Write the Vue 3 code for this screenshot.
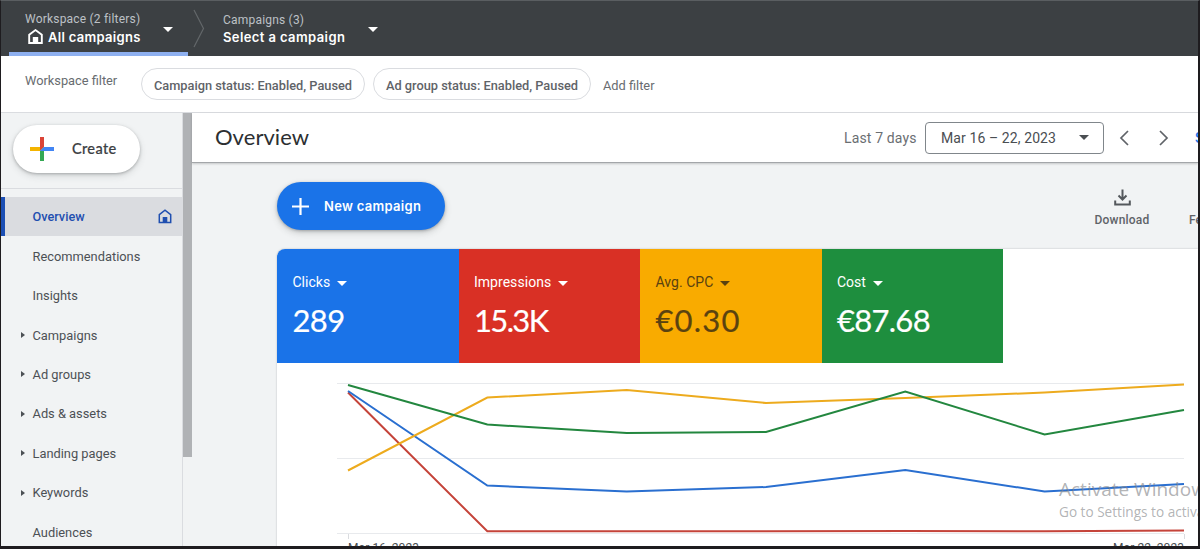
<script setup>
const navItems = [
  { label: 'Overview', active: true },
  { label: 'Recommendations' },
  { label: 'Insights' },
  { label: 'Campaigns', expandable: true },
  { label: 'Ad groups', expandable: true },
  { label: 'Ads & assets', expandable: true },
  { label: 'Landing pages', expandable: true },
  { label: 'Keywords', expandable: true },
  { label: 'Audiences' },
]

const metrics = [
  { label: 'Clicks', value: '289', tone: 'blue' },
  { label: 'Impressions', value: '15.3K', tone: 'red' },
  { label: 'Avg. CPC', value: '€0.30', tone: 'yellow' },
  { label: 'Cost', value: '€87.68', tone: 'green' },
]

const xs = [71, 210.3, 349.7, 489, 628.3, 767.6, 907]
const series = [
  { color: '#c5443a', ys: [29.5, 168.3, 168.3, 168.3, 168, 168.3, 167.5] },
  { color: '#2a6fd0', ys: [28, 122.5, 128.5, 124, 107, 128.5, 121] },
  { color: '#edab1e', ys: [107.5, 34.5, 27, 40, 35, 29.5, 21.5] },
  { color: '#23873f', ys: [22, 61.5, 70, 69, 28.5, 71.5, 47] },
].map((s) => ({ color: s.color, points: s.ys.map((y, i) => `${xs[i]},${y}`).join(' ') }))
</script>

<template>
  <div class="frame">
    <header class="topbar">
      <div class="crumb workspace">
        <div class="crumb-text">
          <span class="crumb-small">Workspace (2 filters)</span>
          <span class="crumb-main">
            <svg class="home" width="15" height="15" viewBox="0 0 15 15"><path d="M1.200 5.700 7.500 1.100l6.300 4.600V14H1.200Z" fill="none" stroke="#fff" stroke-width="1.900" /><rect x="4.800" y="8" width="5.400" height="6" fill="#fff" /></svg>
            <span>All campaigns</span>
          </span>
        </div>
        <i class="caret"></i>
      </div>
      <svg class="chevron" width="14" height="40" viewBox="0 0 14 40"><path d="M1 1 10.500 19.500 1 38" fill="none" stroke="#63676a" stroke-width="1.200" /></svg>
      <div class="crumb campaign">
        <div class="crumb-text">
          <span class="crumb-small">Campaigns (3)</span>
          <span class="crumb-main">Select a campaign</span>
        </div>
        <i class="caret"></i>
      </div>
    </header>

    <div class="filters">
      <span class="filter-label">Workspace filter</span>
      <span class="chip chip-a">Campaign status: Enabled, Paused</span>
      <span class="chip chip-b">Ad group status: Enabled, Paused</span>
      <span class="add">Add filter</span>
    </div>

    <div class="body">
      <aside class="sidebar">
        <div class="create-area">
          <button class="create">
            <svg width="24" height="24" viewBox="0 0 24 24">
              <path d="M10 0h4v10l-4 4Z" fill="#db4437" />
              <path d="M0 10h10v4H0Z" fill="#f4b400" />
              <path d="M10 14l4-4v14h-4Z" fill="#34a853" />
              <path d="M14 10h10v4H10Z" fill="#4285f4" />
            </svg>
            <span>Create</span>
          </button>
        </div>
        <nav>
          <a v-for="item in navItems" :key="item.label" class="nav-item" :class="{ active: item.active }">
            <i class="arrow" :class="{ shown: item.expandable }"></i>
            <span class="nav-label">{{ item.label }}</span>
            <svg v-if="item.active" class="nav-home" width="14" height="15" viewBox="0 0 14 15"><path d="M1.300 5.600 7 1.200l5.700 4.400V13.500H1.300Z" fill="none" stroke="#1f4fb0" stroke-width="1.500" /><rect x="4.700" y="8" width="4.600" height="5.500" fill="#1f4fb0" /></svg>
          </a>
        </nav>
      </aside>
      <div class="scroll"><div class="thumb"></div></div>

      <main class="main">
        <div class="page-head">
          <h1>Overview</h1>
          <span class="range-label">Last 7 days</span>
          <div class="range"><span>Mar 16 – 22, 2023</span><i class="caret"></i></div>
          <svg class="prev" width="10" height="16" viewBox="0 0 10 16"><path d="M9 1 2 8l7 7" fill="none" stroke="#5f6368" stroke-width="1.700" /></svg>
          <svg class="next" width="10" height="16" viewBox="0 0 10 16"><path d="M1 1l7 7-7 7" fill="none" stroke="#5f6368" stroke-width="1.700" /></svg>
          <span class="show">Show</span>
        </div>

        <div class="content">
          <div class="actions">
            <button class="new">
              <svg width="17" height="17" viewBox="0 0 17 17"><path d="M8.500 0v17M0 8.500h17" stroke="#fff" stroke-width="2.200" /></svg>
              <span>New campaign</span>
            </button>
            <div class="tool">
              <svg width="17" height="17" viewBox="0 0 17 17"><path d="M8.500 0.500v9.500M4.500 6.500l4 4 4-4M1.200 11.500v4h14.600v-4" fill="none" stroke="#54585c" stroke-width="2" /></svg>
              <span>Download</span>
            </div>
            <span class="feedback">Feedback</span>
          </div>

          <section class="panel">
            <div class="metrics">
              <div v-for="m in metrics" :key="m.label" class="metric" :class="m.tone">
                <div class="metric-label"><span>{{ m.label }}</span><i class="caret"></i></div>
                <div class="metric-value">{{ m.value }}</div>
              </div>
            </div>
            <svg class="chart" width="921" height="183" viewBox="0 0 921 183">
              <path d="M60 20.500H907M60 95.500H907M60 170.500H907" stroke="#e8eaed" stroke-width="1.200" />
              <path d="M71.500 171v5M907.500 171v5" stroke="#dadce0" />
              <polyline v-for="s in series" :key="s.color" :points="s.points" fill="none" :stroke="s.color" stroke-width="2" />
              <text x="71" y="189" textLength="71">Mar 16, 2023</text>
              <text x="836" y="189" textLength="71">Mar 22, 2023</text>
            </svg>
          </section>
        </div>
      </main>
    </div>

    <div class="watermark">
      <div class="wm-title">Activate Windows</div>
      <div class="wm-sub">Go to Settings to activate Windows.</div>
    </div>
  </div>
</template>

<style>
body { margin: 0; overflow: hidden; }
</style>

<style scoped>
* { box-sizing: border-box; }
.frame {
  position: relative; width: 1200px; height: 549px; overflow: hidden;
  display: flex; flex-direction: column;
  border: solid #1e1c1f; border-width: 1px 2px 3px 1px; border-top-color: #5a5e61;
  background: #f1f3f4; color: #4a4e52; font-family: Roboto, sans-serif; font-size: 13px;
  white-space: nowrap;
}
.topbar { flex: none; display: flex; height: 55px; background: #3c4043; }
.crumb { display: flex; color: #fff; }
.crumb-text { display: flex; flex-direction: column; }
.crumb-small { height: 18px; font-size: 12px; line-height: 18px; color: #bdc1c6; letter-spacing: .2px; }
.crumb-main { display: flex; height: 18px; font: 600 13px/18px Inter, sans-serif; letter-spacing: .4px; }
.workspace { width: 179px; margin-left: 8px; padding: 9px 0 0 16px; border-bottom: 4px solid #8eb0f0; border-radius: 3px 3px 0 0; }
.workspace .crumb-text { width: 138px; }
.workspace .crumb-main { letter-spacing: .3px; }
.home { flex: none; margin: 1px 5px 0 3px; }
.caret { width: 0; height: 0; border: 5.500px solid transparent; border-top: 5px solid currentColor; border-bottom: 0; }
.crumb .caret { margin-top: 17px; }
.chevron { margin: 8px 0 0 5px; }
.campaign { padding: 10px 0 0 16px; }
.campaign .crumb-text { width: 145px; }
.campaign .crumb-main { margin-top: -1px; }
.campaign .caret { margin-top: 16px; }

.filters { flex: none; display: flex; height: 57px; padding: 12px 0 0 24px; background: #fff; border-bottom: 1px solid #dadce0; color: #686c70; font-size: 12.800px; }
.filter-label { width: 116px; line-height: 25px; }
.chip { height: 32px; margin-right: 8px; border: 1px solid #dadce0; border-radius: 16px; line-height: 33px; text-align: center; font-weight: 500; color: #5f6368; }
.chip-a { width: 224px; }
.chip-b { width: 218px; margin-right: 12px; }
.add { line-height: 35px; }

.body { display: flex; flex: 1; min-height: 0; }
.sidebar { flex: none; width: 181px; overflow: hidden; }
.create-area { height: 76px; padding: 11.500px 0 0 12px; border-bottom: 1px solid #dadce0; }
.create { display: flex; align-items: center; width: 127px; height: 48px; padding: 0 0 0 17px; gap: 18px; border: 0; border-radius: 24px; background: #fff; box-shadow: 0 1px 3px rgba(60,64,67,.35), 0 3px 7px rgba(60,64,67,.15); color: #3c4043; font: 500 14.500px Lato, sans-serif; letter-spacing: .35px; -webkit-text-stroke: .2px currentColor; }
nav { padding-top: 8px; }
.nav-item { display: flex; align-items: center; height: 39.450px; padding-left: 20px; font-size: 12.850px; color: #4c5054; }
.nav-item.active { padding-left: 16px; border-left: 4px solid #1c4fb4; background: #dadce0; color: #1f4fb0; font-weight: 500; font-size: 12.700px; }
.arrow { width: 0; height: 0; margin-right: 7.500px; border: 3.500px solid transparent; border-left: 4px solid transparent; border-right: 0; }
.arrow.shown { border-left-color: #4c5054; }
.nav-label { flex: 1; }
.nav-home { margin-right: 10px; }
.scroll { flex: none; width: 9.500px; border-left: 1px solid #dadce0; }
.thumb { width: 8.500px; height: 344px; background: #b0b2b5; }

.main { flex: 1; min-width: 0; display: flex; flex-direction: column; }
.page-head { flex: none; display: flex; align-items: center; height: 50px; padding-left: 23.500px; background: #fff; border-bottom: 1px solid #a3a6a9; box-shadow: 0 1px 2px rgba(0,0,0,.18); z-index: 1; }
.page-head > * { flex: none; }
h1 { width: 629px; margin: 0; font: 400 22px/46px Lato, sans-serif; color: #2c2f32; letter-spacing: .05px; padding-bottom: 2px; }
.range-label { width: 81px; font-size: 14px; color: #6a6e72; letter-spacing: .15px; }
.range { display: flex; align-items: center; width: 179px; height: 32px; padding-left: 15px; border: 1px solid #80868b; border-radius: 4px; font-size: 14px; color: #4a4e52; letter-spacing: .1px; }
.range span { width: 138px; }
.prev { margin-left: 15px; }
.next { margin-left: 30px; }
.show { margin-left: 26px; font-size: 14px; font-weight: 500; color: #1a73e8; }
.content { flex: 1; min-height: 0; padding: 19px 0 0 85.500px; }
.actions { display: flex; height: 67px; }
.actions > * { flex: none; }
.new { display: flex; align-items: center; width: 168px; height: 48px; padding: 0 0 0 15px; gap: 15px; border: 0; border-radius: 24px; background: #1a73e8; color: #fff; font: 600 13px Inter, sans-serif; letter-spacing: .3px; box-shadow: 0 1px 3px rgba(60,64,67,.35), 0 3px 7px rgba(60,64,67,.2); }
.tool { display: flex; flex-direction: column; align-items: center; width: 56px; margin-left: 649px; padding-top: 7px; font-size: 12px; font-weight: 500; color: #5f6368; letter-spacing: .2px; }
.tool span { margin-top: 6px; line-height: 16px; }
.feedback { margin: 30px 0 0 39px; font-size: 12px; line-height: 16px; font-weight: 500; color: #5f6368; }
.panel { height: 310px; background: #fff; border-radius: 8px 0 0; box-shadow: 0 0 2px rgba(60,64,67,.35); overflow: hidden; }
.metrics { display: flex; width: 726px; height: 114px; }
.metric { flex: 1; padding: 24px 0 0 15.400px; color: #fff; }
.metric-label { display: flex; align-items: center; height: 18px; gap: 7px; font-size: 14px; letter-spacing: .05px; }
.metric-label .caret { margin-top: 2px; }
.metric-value { margin-top: 10px; font: 400 31px/38px Lato, sans-serif; -webkit-text-stroke: .2px currentColor; }
.blue { background: #1a73e8; }
.blue .metric-value { letter-spacing: -.5px; }
.red { background: #d93025; }
.red .metric-value { letter-spacing: -1.600px; }
.yellow { background: #f9ab00; color: #5a4210; }
.yellow .metric-value { letter-spacing: 1.200px; }
.green { background: #1e8e3e; }
.green .metric-value { letter-spacing: -.7px; }
.chart { display: block; }
.chart text { font-size: 12px; fill: #4a4e52; }
.watermark { position: absolute; left: 1058px; top: 476px; color: rgba(130,132,135,.62); font-family: "Open Sans", sans-serif; }
.wm-title { font-size: 19px; line-height: 25px; }
.wm-sub { font-size: 13.600px; line-height: 20px; }
</style>
